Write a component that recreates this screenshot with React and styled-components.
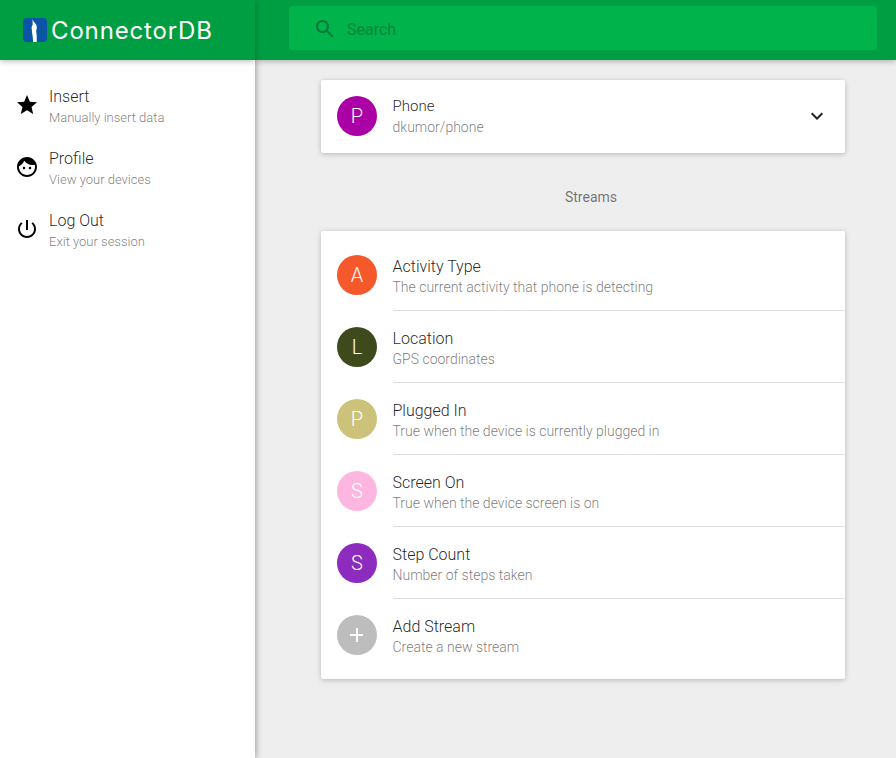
import React from "react";
import styled, { createGlobalStyle } from "styled-components";

const GlobalStyle = createGlobalStyle`
  html, body {
    margin: 0;
    padding: 0;
    height: 100%;
    background: #eeeeee;
    font-family: Roboto, "Liberation Sans", sans-serif;
  }
  * {
    box-sizing: border-box;
  }
`;

const Page = styled.div`
  display: grid;
  grid-template-columns: 255px 1fr;
  grid-template-rows: 60px 1fr;
  height: 100vh;
  overflow: hidden;
`;

const LogoBar = styled.div`
  position: relative;
  z-index: 3;
  display: flex;
  align-items: center;
  gap: 4px;
  padding: 0 0 0 23px;
  background: #009e42;
  box-shadow: 0 1px 6px rgba(0, 0, 0, 0.3);
`;

const LogoText = styled.span`
  color: #fff;
  font-family: Inter, sans-serif;
  font-size: 24px;
  font-weight: 400;
  letter-spacing: 0.85px;
  white-space: nowrap;
`;

const SearchBar = styled.div`
  position: relative;
  z-index: 2;
  padding: 6px 19px 10px 34px;
  background: #009e42;
  box-shadow: 0 1px 6px rgba(0, 0, 0, 0.3);
`;

const SearchBox = styled.div`
  display: flex;
  align-items: center;
  gap: 10px;
  height: 44px;
  padding: 2px 0 0 24px;
  border-radius: 3px;
  background: #00b34a;
  color: #00853a;
  font-size: 16px;
  font-weight: 400;
`;

const Sidebar = styled.nav`
  position: relative;
  z-index: 2;
  padding-top: 16px;
  background: #fff;
  box-shadow: 1px 0 6px rgba(0, 0, 0, 0.35);
`;

const NavItem = styled.div`
  display: flex;
  align-items: center;
  gap: 10px;
  height: 62px;
  padding: 0 0 0 15px;
`;

const NavIcon = styled.svg`
  width: 24px;
  height: 24px;
  margin-bottom: 4px;
  flex: none;
  fill: #000;
`;

const NavText = styled.div`
  display: flex;
  flex-direction: column;
  gap: 5px;
`;

const NavTitle = styled.div`
  font-size: 16px;
  line-height: 16px;
  font-weight: 300;
  color: rgba(0, 0, 0, 0.87);
`;

const NavSub = styled.div`
  font-size: 13px;
  line-height: 16px;
  font-weight: 300;
  color: rgba(0, 0, 0, 0.54);
`;

const Main = styled.main`
  padding: 20px 51px 0 66px;
`;

const Card = styled.section`
  border-radius: 2px;
  background: #fff;
  box-shadow: 0 1px 6px rgba(0, 0, 0, 0.12), 0 1px 4px rgba(0, 0, 0, 0.12);
`;

const Avatar = styled.div`
  display: flex;
  align-items: center;
  justify-content: center;
  flex: none;
  width: 40px;
  height: 40px;
  border-radius: 50%;
  background: ${(p) => p.$color};
  color: #fff;
  font-size: 20px;
  font-weight: 300;
`;

const RowText = styled.div`
  flex: 1;
  display: flex;
  flex-direction: column;
  gap: 5px;
  margin-left: 15.5px;
`;

const RowTitle = styled.div`
  font-size: ${(p) => (p.$small ? "15px" : "16px")};
  line-height: 16px;
  font-weight: 300;
  color: rgba(0, 0, 0, 0.87);
`;

const RowSub = styled.div`
  font-size: 14px;
  line-height: 16px;
  font-weight: 300;
  color: rgba(0, 0, 0, 0.54);
`;

const DeviceRow = styled.div`
  display: flex;
  align-items: flex-start;
  height: 73px;
  padding: 16px 16px 0;

  ${RowText} {
    margin-top: 2px;
  }
`;

const Chevron = styled.svg`
  width: 24px;
  height: 24px;
  margin-top: 8px;
  fill: #222;
`;

const SectionHeader = styled.h2`
  margin: 0;
  height: 78px;
  padding-left: 16px;
  text-align: center;
  font-size: 14px;
  line-height: 88px;
  font-weight: 400;
  color: rgba(0, 0, 0, 0.54);
`;

const StreamList = styled(Card)`
  padding: 8px 0;
`;

const StreamRow = styled.div`
  position: relative;
  display: flex;
  align-items: center;
  height: 72px;
  padding: 0 16px;

  ${RowText} {
    gap: 4px;
    padding-top: 3px;
  }

  &:not(:last-child)::after {
    content: "";
    position: absolute;
    left: 72px;
    right: 0;
    bottom: 0;
    height: 1px;
    background: #e0e0e0;
  }
`;

const Plus = styled.svg`
  width: 24px;
  height: 24px;
  fill: #fff;
`;

const LogoMark = () => (
  <svg width="24" height="24" viewBox="0 0 24 24" style={{ flex: "none" }}>
    <rect width="24" height="24" rx="4" fill="#0a55a5" />
    <path
      d="M9.6 1l.9 2.6 1.3 1.2 1.6 2.2.5 3-.8 3 .6 4.2V24h-3.6l-.4-5.6-.7-4.4-.4-5 1-2.2z"
      fill="#fff"
    />
  </svg>
);

const navItems = [
  {
    title: "Insert",
    sub: "Manually insert data",
    d: "M12 17.27L18.18 21l-1.64-7.03L22 9.24l-7.19-.61L12 2 9.19 8.63 2 9.24l5.46 4.73L5.82 21z",
  },
  {
    title: "Profile",
    sub: "View your devices",
    d: "M9 11.75c-.69 0-1.25.56-1.25 1.25s.56 1.25 1.25 1.25 1.25-.56 1.25-1.25-.56-1.25-1.25-1.25zm6 0c-.69 0-1.25.56-1.25 1.25s.56 1.25 1.25 1.25 1.25-.56 1.25-1.25-.56-1.25-1.25-1.25zM12 2C6.48 2 2 6.48 2 12s4.48 10 10 10 10-4.48 10-10S17.52 2 12 2zm0 18c-4.41 0-8-3.59-8-8 0-.29.02-.58.05-.86 2.36-1.05 4.23-2.98 5.21-5.37C11.07 8.33 14.05 10 17.42 10c.78 0 1.53-.09 2.25-.26.21.71.33 1.47.33 2.26 0 4.41-3.59 8-8 8z",
  },
  {
    title: "Log Out",
    sub: "Exit your session",
    d: "M13 3h-2v10h2V3zm4.83 2.17l-1.42 1.42C17.99 7.86 19 9.81 19 12c0 3.87-3.13 7-7 7s-7-3.13-7-7c0-2.19 1.01-4.14 2.58-5.42L6.17 5.17C4.23 6.82 3 9.26 3 12c0 4.97 4.03 9 9 9s9-4.03 9-9c0-2.74-1.23-5.18-3.17-6.83z",
  },
];

const streams = [
  { letter: "A", color: "#f4582b", title: "Activity Type", sub: "The current activity that phone is detecting" },
  { letter: "L", color: "#3f4a1c", title: "Location", sub: "GPS coordinates" },
  { letter: "P", color: "#cdc27a", title: "Plugged In", sub: "True when the device is currently plugged in" },
  { letter: "S", color: "#fdb6e0", title: "Screen On", sub: "True when the device screen is on" },
  { letter: "S", color: "#8e2bbf", title: "Step Count", sub: "Number of steps taken" },
];

export default function App() {
  return (
    <>
      <GlobalStyle />
      <Page>
        <LogoBar>
          <LogoMark />
          <LogoText>ConnectorDB</LogoText>
        </LogoBar>
        <SearchBar>
          <SearchBox>
            <svg width="24" height="24" viewBox="0 0 24 24" fill="#00763a">
              <path d="M15.5 14h-.79l-.28-.27C15.41 12.59 16 11.11 16 9.5 16 5.91 13.09 3 9.5 3S3 5.91 3 9.5 5.91 16 9.5 16c1.61 0 3.09-.59 4.23-1.57l.27.28v.79l5 4.99L20.49 19l-4.99-5zm-6 0C7.01 14 5 11.99 5 9.5S7.01 5 9.5 5 14 7.01 14 9.5 11.99 14 9.5 14z" />
            </svg>
            Search
          </SearchBox>
        </SearchBar>
        <Sidebar>
          {navItems.map((item) => (
            <NavItem key={item.title}>
              <NavIcon viewBox="0 0 24 24">
                <path d={item.d} />
              </NavIcon>
              <NavText>
                <NavTitle>{item.title}</NavTitle>
                <NavSub>{item.sub}</NavSub>
              </NavText>
            </NavItem>
          ))}
        </Sidebar>
        <Main>
          <Card>
            <DeviceRow>
              <Avatar $color="#aa00a6">P</Avatar>
              <RowText>
                <RowTitle $small>Phone</RowTitle>
                <RowSub>dkumor/phone</RowSub>
              </RowText>
              <Chevron viewBox="0 0 24 24">
                <path d="M16.59 8.59L12 13.17 7.41 8.59 6 10l6 6 6-6z" />
              </Chevron>
            </DeviceRow>
          </Card>
          <SectionHeader>Streams</SectionHeader>
          <StreamList>
            {streams.map((s) => (
              <StreamRow key={s.title}>
                <Avatar $color={s.color}>{s.letter}</Avatar>
                <RowText>
                  <RowTitle>{s.title}</RowTitle>
                  <RowSub>{s.sub}</RowSub>
                </RowText>
              </StreamRow>
            ))}
            <StreamRow>
              <Avatar $color="#bdbdbd">
                <Plus viewBox="0 0 24 24">
                  <path d="M19 13h-6v6h-2v-6H5v-2h6V5h2v6h5v2z" />
                </Plus>
              </Avatar>
              <RowText>
                <RowTitle>Add Stream</RowTitle>
                <RowSub>Create a new stream</RowSub>
              </RowText>
            </StreamRow>
          </StreamList>
        </Main>
      </Page>
    </>
  );
}
